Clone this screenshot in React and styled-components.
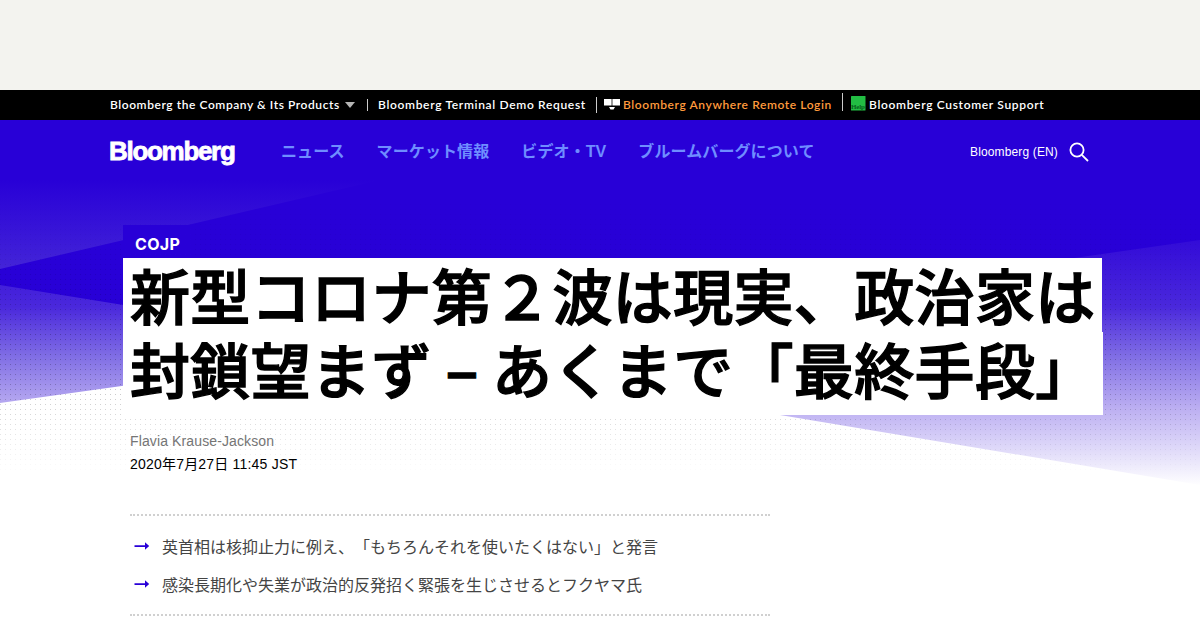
import React from 'react';
import styled, { createGlobalStyle } from 'styled-components';

const GlobalStyle = createGlobalStyle`
  * {
    box-sizing: border-box;
  }

  body {
    margin: 0;
    background: #fff;
    font-family: "Liberation Sans", "Noto Sans CJK JP", sans-serif;
    text-spacing-trim: space-all;
    overflow: hidden;
  }
`;

const navItems = ['ニュース', 'マーケット情報', 'ビデオ・TV', 'ブルームバーグについて'];

const points = [
  '英首相は核抑止力に例え、「もちろんそれを使いたくはない」と発言',
  '感染長期化や失業が政治的反発招く緊張を生じさせるとフクヤマ氏',
];

const Page = styled.div`
  width: 1200px;
  height: 630px;
  overflow: hidden;
  background: #fff;
`;

const AdSlot = styled.div`
  height: 90px;
  background: #f3f3ef;
`;

const TopBar = styled.div`
  display: flex;
  height: 30px;
  padding-left: 110px;
  background: #000;
`;

const TopLink = styled.a`
  display: flex;
  align-items: center;
  width: ${(p) => p.$width}px;
  height: 29px;
  color: ${(p) => p.$color || '#fff'};
  font: 600 12px/29px Lato, sans-serif;
  letter-spacing: ${(p) => p.$spacing}px;
  white-space: nowrap;
`;

const Caret = styled.span`
  margin-left: auto;
  margin-right: 12px;
  border: 5px solid transparent;
  border-top: 6px solid #b5b5b5;
  border-bottom: 0;
`;

const Divider = styled.span`
  width: 1px;
  height: ${(p) => p.$height}px;
  margin-top: ${(p) => p.$top}px;
  margin-right: ${(p) => p.$gap}px;
  background: #ccc;
`;

const BarIcon = styled.svg`
  flex: none;
  margin-right: 3px;
  margin-top: ${(p) => p.$top || 0}px;
`;

const Hero = styled.div`
  display: grid;
  height: 368px;

  > * {
    grid-area: 1 / 1;
  }
`;

const Backdrop = styled.svg`
  display: block;
`;

const HeroContent = styled.div`
  z-index: 1;
`;

const Header = styled.header`
  display: flex;
  align-items: center;
  height: 64px;
  padding: 0 111px 0 109px;
`;

const Logo = styled.div`
  width: 172px;
  padding-bottom: 2px;
  color: #fff;
  font: 700 26px/38px "Liberation Sans", sans-serif;
  letter-spacing: -1.3px;
  -webkit-text-stroke: 0.8px #fff;
`;

const Nav = styled.nav`
  display: flex;
  gap: 32px;
  padding-bottom: 4px;
  color: #6f8dff;
  font-size: 16px;
  font-weight: 700;
  letter-spacing: 0.1px;
  white-space: nowrap;
`;

const Edition = styled.span`
  margin-left: auto;
  margin-right: 11px;
  color: #fff;
  font-size: 12px;
  letter-spacing: 0.14px;
`;

const HeadlineBlock = styled.div`
  display: flex;
  flex-direction: column;
  align-items: flex-start;
  padding: 41px 0 0 123px;
`;

const Kicker = styled.div`
  height: 33px;
  padding: 0 12px;
  background: #2800d7;
  color: #fff;
  font: 700 16px/39px Inter, sans-serif;
  letter-spacing: 0.3px;
`;

const Title = styled.h1`
  margin: 0;
  font-size: 60px;
  font-weight: 500;
  letter-spacing: 0.35px;
  -webkit-text-stroke: 1.4px #000;
`;

const TitleLine = styled.span`
  display: block;
  width: ${(p) => p.$width}px;
  height: ${(p) => p.$height}px;
  padding-left: 7px;
  background: #fff;
  line-height: 83px;
  white-space: nowrap;
`;

const Dash = styled.span`
  display: inline-block;
  height: 60px;
  line-height: 60px;
  transform: translateY(4px) scaleX(0.64);
`;

const Byline = styled.div`
  padding: 15px 0 0 130px;
  font-size: 14px;
  line-height: 23px;
`;

const Author = styled.div`
  height: 23px;
  color: #757575;
  letter-spacing: 0.12px;
`;

const Published = styled.div`
  letter-spacing: 0.2px;
`;

const Summary = styled.ul`
  display: flex;
  flex-direction: column;
  width: 640px;
  height: 102px;
  margin: 26px 0 0 130px;
  padding: 11px 0 0;
  border-top: 2px dotted #d0d0d0;
  border-bottom: 2px dotted #d0d0d0;
  list-style: none;
`;

const SummaryItem = styled.li`
  display: flex;
  align-items: center;
  gap: 12px;
  height: 38px;
  padding-left: 4px;
  color: #444;
  font-size: 16px;
  white-space: nowrap;
`;

const MonitorIcon = () => (
  <BarIcon width="16" height="11" viewBox="0 0 16 11">
    <path d="M0 0h7.600v6.500H0zM8.400 0H16v6.500H8.400z" fill="#fff" />
    <path d="M5 8h6l-1.500 2.500h-3z" fill="#fff" />
  </BarIcon>
);

const HelpIcon = () => (
  <BarIcon width="16" height="16" viewBox="0 0 16 16" $top={-3}>
    <rect x="1" y="1" width="14.500" height="14.500" rx="0.500" fill="#22bd43" />
    <text x="1" y="14" fontSize="7" fontFamily="Liberation Serif, serif" letterSpacing="-0.2" fill="#06621c">Help</text>
  </BarIcon>
);

const SearchIcon = () => (
  <svg width="20" height="20" viewBox="0 0 20 20" fill="none" stroke="#fff" strokeWidth="1.800">
    <circle cx="8" cy="8" r="6.600" />
    <path d="M12.800 12.800L19 19" />
  </svg>
);

const Arrow = () => (
  <svg width="16" height="10" viewBox="0 0 16 10">
    <path d="M0.500 4.200H11V1.200L15.200 5L11 8.800V5.900H0.500z" fill="#2800d7" />
  </svg>
);

const HeroBackdrop = () => (
  <Backdrop width="1200" height="368" viewBox="0 120 1200 368">
    <defs>
      <linearGradient id="wedge" gradientUnits="userSpaceOnUse" x1="0" y1="180" x2="0" y2="300">
        <stop offset="0" stopColor="#2800d7" />
        <stop offset="0.750" stopColor="#4425d8" />
        <stop offset="1" stopColor="#5535da" />
      </linearGradient>
      <linearGradient id="fade" gradientUnits="userSpaceOnUse" x1="0" y1="230" x2="0" y2="486">
        <stop offset="0" stopColor="#2f07d7" />
        <stop offset="0.300" stopColor="#4a28dc" />
        <stop offset="0.500" stopColor="#8270e5" />
        <stop offset="0.700" stopColor="#bdb0f2" />
        <stop offset="0.850" stopColor="#ded8f9" />
        <stop offset="1" stopColor="#fff" />
      </linearGradient>
      <linearGradient id="dotFade" gradientUnits="userSpaceOnUse" x1="0" y1="190" x2="0" y2="475">
        <stop offset="0" stopColor="#fff" stopOpacity="0" />
        <stop offset="0.250" stopColor="#fff" stopOpacity="0.300" />
        <stop offset="0.500" stopColor="#fff" stopOpacity="1" />
        <stop offset="0.700" stopColor="#fff" stopOpacity="0.900" />
        <stop offset="1" stopColor="#fff" stopOpacity="0" />
      </linearGradient>
      <pattern id="dots" width="5" height="5" patternUnits="userSpaceOnUse">
        <rect x="0" y="4" width="1" height="1" fill="#000" fillOpacity="0.240" />
      </pattern>
      <mask id="dotMask">
        <rect x="0" y="180" width="1200" height="308" fill="url(#dotFade)" />
      </mask>
    </defs>
    <rect y="120" width="1200" height="368" fill="#fff" />
    <path d="M0 120H1200V310H0z" fill="#2800d7" />
    <path d="M0 180H380L0 269z" fill="url(#wedge)" />
    <path d="M0 285L560 376V325L0 403z" fill="url(#fade)" />
    <path d="M1200 240L600 326V385L1200 485z" fill="url(#fade)" />
    <rect x="0" y="180" width="1200" height="308" fill="url(#dots)" mask="url(#dotMask)" />
  </Backdrop>
);

export default function App() {
  return (
    <>
      <GlobalStyle />
      <Page>
        <AdSlot />
        <TopBar>
          <TopLink $width={257} $spacing={0.57}>
            Bloomberg the Company &amp; Its Products
            <Caret />
          </TopLink>
          <Divider $height={12} $top={9} $gap={10} />
          <TopLink $width={218} $spacing={0.67}>Bloomberg Terminal Demo Request</TopLink>
          <Divider $height={16} $top={7} $gap={7} />
          <TopLink $width={238} $spacing={0.59} $color="#ff9a3c">
            <MonitorIcon />
            Bloomberg Anywhere Remote Login
          </TopLink>
          <Divider $height={18} $top={3} $gap={7} />
          <TopLink $width={220} $spacing={0.67}>
            <HelpIcon />
            Bloomberg Customer Support
          </TopLink>
        </TopBar>
        <Hero>
          <HeroBackdrop />
          <HeroContent>
            <Header>
              <Logo>Bloomberg</Logo>
              <Nav>
                {navItems.map((item) => (
                  <span key={item}>{item}</span>
                ))}
              </Nav>
              <Edition>Bloomberg (EN)</Edition>
              <SearchIcon />
            </Header>
            <HeadlineBlock>
              <Kicker>COJP</Kicker>
              <Title>
                <TitleLine $width={979} $height={74}>新型コロナ第２波は現実、政治家は</TitleLine>
                <TitleLine $width={980} $height={83}>
                  封鎖望まず<Dash>－</Dash>あくまで「最終手段」
                </TitleLine>
              </Title>
            </HeadlineBlock>
            <Byline>
              <Author>Flavia Krause-Jackson</Author>
              <Published>2020年7月27日 11:45 JST</Published>
            </Byline>
          </HeroContent>
        </Hero>
        <Summary>
          {points.map((point) => (
            <SummaryItem key={point}>
              <Arrow />
              {point}
            </SummaryItem>
          ))}
        </Summary>
      </Page>
    </>
  );
}
